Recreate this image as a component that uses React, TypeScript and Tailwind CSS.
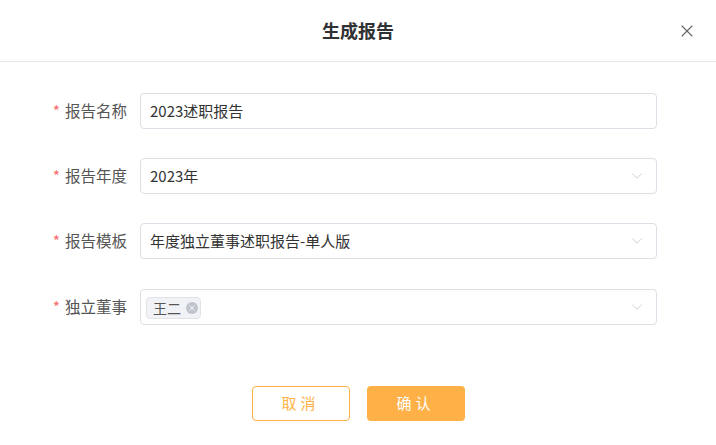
import { X, ChevronDown } from "lucide-react";

const rows = [
    { label: "报告名称", value: "2023述职报告", select: false },
    { label: "报告年度", value: "2023年", select: true },
    { label: "报告模板", value: "年度独立董事述职报告-单人版", select: true },
];

export default function App() {
    return (
        <div className="w-[716px] h-[445px] bg-white text-[#333] font-['Noto_Sans_CJK_SC',sans-serif]">
            {/* Header */}
            <div className="relative h-[62px] flex items-center justify-center border-b border-[#e8e8e8]">
                <h2 className="text-[18px] font-bold text-[#303133]">生成报告</h2>
                <X className="absolute right-[19px] top-[21px] w-[20px] h-[20px] text-[#666]" strokeWidth={1.3} />
            </div>

            {/* Form */}
            <div className="pt-[31px] pr-[59px] flex flex-col gap-[29px]">
                {rows.map((row) => (
                    <div key={row.label} className="flex items-center">
                        <label className="w-[140px] pr-[13px] text-right text-[15.5px] text-[#555]">
                            <span className="text-[#f56c6c] mr-[5px]">*</span>
                            {row.label}
                        </label>
                        <div className="flex-1 h-[36px] border border-[#dcdfe6] rounded-[4px] flex items-center pl-[9px] pr-[10px] text-[15px] text-[#333]">
                            <span className="flex-1">{row.value}</span>
                            {row.select && <ChevronDown className="w-[18px] h-[18px] text-[#c0c4cc]" strokeWidth={1.1} />}
                        </div>
                    </div>
                ))}
                <div className="flex items-center mt-[1px]">
                    <label className="w-[140px] pr-[13px] text-right text-[15.5px] text-[#555]">
                        <span className="text-[#f56c6c] mr-[5px]">*</span>
                        独立董事
                    </label>
                    <div className="flex-1 h-[36px] border border-[#dcdfe6] rounded-[4px] flex items-center pl-[5px] pr-[10px]">
                        <div className="flex-1">
                            <span className="inline-flex items-center h-[22px] pl-[6px] pr-[2px] gap-[5px] bg-[#f0f2f5] border border-[#e2e3e6] rounded-[4px] text-[14px] text-[#555]">
                                王二
                                <span className="w-[12px] h-[12px] rounded-full bg-[#c0c4cc] flex items-center justify-center">
                                    <X className="w-[8px] h-[8px] text-white" strokeWidth={2.5} />
                                </span>
                            </span>
                        </div>
                        <ChevronDown className="w-[18px] h-[18px] text-[#c0c4cc]" strokeWidth={1.1} />
                    </div>
                </div>
            </div>

            {/* Footer */}
            <div className="mt-[61px] flex justify-center gap-[17px]">
                <button className="w-[98px] h-[35px] border border-[#ffb148] rounded-[4px] text-[#ffb148] text-[15px] tracking-[4px] bg-white">
                    取消
                </button>
                <button className="w-[98px] h-[35px] rounded-[4px] bg-[#ffb148] text-white text-[15px] tracking-[4px]">
                    确认
                </button>
            </div>
        </div>
    );
}
